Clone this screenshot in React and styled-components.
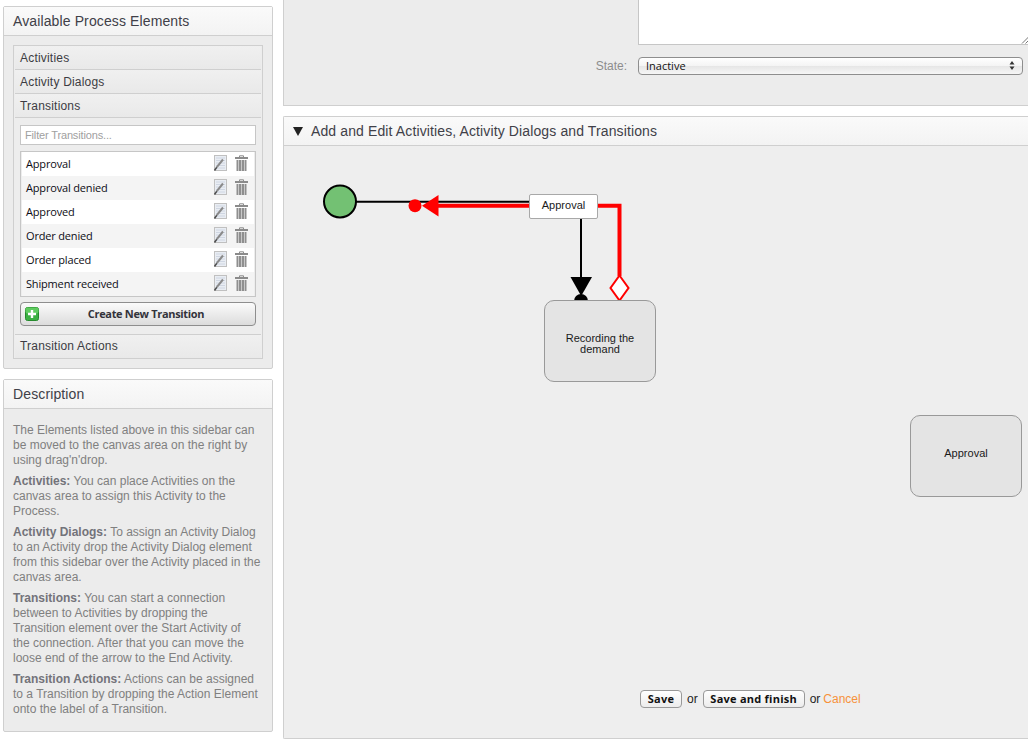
import React from "react";
import styled, { createGlobalStyle } from "styled-components";

const Global = createGlobalStyle`
  html, body { margin: 0; padding: 0; height: 740px; overflow: hidden; background: #fff; }
  body { font-family: "Liberation Sans", Arial, sans-serif; }
  * { box-sizing: border-box; }
`;

const Page = styled.div`
  display: flex;
  width: 1028px;
  height: 740px;
  overflow: hidden;
`;
const Sidebar = styled.aside`
  flex: none;
  width: 270px;
  margin-left: 3px;
  padding-top: 6px;
  display: flex;
  flex-direction: column;
  gap: 10px;
`;
const Panel = styled.section`
  background: #ececec;
  border: 1px solid #cfcfcf;
  border-radius: 2px;
  height: ${(p) => p.$h}px;
`;
const PanelHeader = styled.h2`
  margin: 0;
  height: 29px;
  padding-left: 9px;
  background: linear-gradient(#fafafa, #f3f3f3);
  border-bottom: 1px solid #cfcfcf;
  font-size: 14px;
  font-weight: normal;
  letter-spacing: 0.12px;
  line-height: 28px;
  color: #404048;
  display: flex;
  align-items: center;
  gap: 8px;
`;
const Accordion = styled.div`
  margin: 9px 9px 0;
  width: 250px;
  height: 314px;
  border: 1px solid #cfcfcf;
  padding: 0 1px;
  background: #ededed;
`;
const AccordionItem = styled.div`
  height: 24px;
  padding: 1px 0 0 5px;
  font-size: 12px;
  letter-spacing: 0.2px;
  line-height: 23px;
  color: #3c3c42;
  background: linear-gradient(#f0f0f0, #e9e9e9);
  border-bottom: 1px solid #cfcfcf;
  &:last-child { border-bottom: 0; border-top: 1px solid #cfcfcf; padding-top: 0; }
`;
const TabBody = styled.div`
  height: 216px;
  padding: 7px 5px 0;
  background: #ededed;
`;
const FilterInput = styled.input`
  display: block;
  width: 236px;
  height: 20px;
  padding: 0 4px;
  margin: 0;
  border: 1px solid #c6c6c6;
  background: #fff;
  font: 11px "Liberation Sans", Arial, sans-serif;
  letter-spacing: -0.15px;
  color: #888;
  outline: none;
  &::placeholder { color: #a0a0a0; opacity: 1; }
`;
const ItemList = styled.ul`
  list-style: none;
  margin: 6px 0 0;
  padding: 0 1px 1px;
  width: 236px;
  height: 146px;
  border: 1px solid #c6c6c6;
  background: #ededed;
`;
const Item = styled.li`
  height: 24px;
  display: flex;
  align-items: center;
  padding: 0 6px 0 4px;
  background: ${(p) => (p.$alt ? "#f4f4f4" : "#fff")};
  color: #0d0d14;
  font: 11px/24px "Open Sans", sans-serif;
  letter-spacing: -0.17px;
`;
const ItemName = styled.span`
  flex: 1;
`;
const ItemIcons = styled.span`
  display: flex;
  align-items: center;
  gap: 8px;
  margin-top: -2px;
`;
const CreateButton = styled.button`
  display: flex;
  align-items: center;
  width: 236px;
  height: 24px;
  margin: 5px 0 0;
  padding: 0 2px 1px 4px;
  border: 1px solid #8e8e8e;
  border-radius: 4px;
  background: linear-gradient(#fbfbfb, #dcdcdc);
  color: #33333b;
  font: bold 11px "Open Sans", sans-serif;
  letter-spacing: -0.33px;
`;
const CreateLabel = styled.span`
  flex: 1;
  text-align: center;
`;
const Description = styled.div`
  padding: 14px 0 0 9px;
  font-size: 12px;
  line-height: 15px;
  color: #808080;
  white-space: nowrap;
  p { margin: 0 0 6px; }
  b { color: #73737a; }
`;
const Main = styled.main`
  flex: none;
  width: 745px;
  margin-left: 10px;
  display: flex;
  flex-direction: column;
  gap: 10px;
`;
const PropsPanel = styled.section`
  height: 106px;
  background: #ececec;
  border-bottom: 1px solid #cfcfcf;
  border-left: 1px solid #cfcfcf;
  padding-left: 354px;
`;
const TextArea = styled.div`
  position: relative;
  height: 45px;
  width: 391px;
  background: #fff;
  border: 1px solid #c6c6c6;
  border-top: 0;
  border-right: 0;
`;
const Grip = styled.svg`
  position: absolute;
  right: 0;
  bottom: 0;
`;
const StateRow = styled.div`
  display: flex;
  align-items: center;
  margin-top: 12px;
  height: 18px;
`;
const StateLabel = styled.label`
  width: 343px;
  margin-left: -354px;
  text-align: right;
  font-size: 12px;
  color: #8c8c8c;
  margin-right: 11px;
  flex: none;
`;
const SelectBox = styled.div`
  width: 385px;
  height: 18px;
  flex: none;
  display: flex;
  align-items: center;
  justify-content: space-between;
  padding: 0 7px 2px 7px;
  border: 1px solid #8e8e8e;
  border-radius: 4px;
  background: linear-gradient(#fff 0, #f4f4f4 50%, #e6e6e6 51%, #f6f6f6 100%);
  font: 11px "Open Sans", sans-serif;
  color: #111;
`;
const CanvasPanel = styled.section`
  height: 623px;
  background: #ececec;
  border: 1px solid #cfcfcf;
  border-right: 0;
  border-radius: 2px 0 0 2px;
  display: flex;
  flex-direction: column;
`;
const Canvas = styled.div`
  position: relative;
  flex: 1;
  background: #eeeeee;
`;
const Wires = styled.svg`
  position: absolute;
  left: 0;
  top: 0;
`;
const Node = styled.div`
  position: absolute;
  left: ${(p) => p.$x}px;
  top: ${(p) => p.$y}px;
  width: 112px;
  height: 82px;
  display: flex;
  align-items: center;
  justify-content: center;
  padding: ${(p) => p.$pt}px 12px ${(p) => p.$pb}px;
  text-align: center;
  background: #e4e4e4;
  border: 1px solid #999;
  border-radius: 10px;
  font-size: 11px;
  line-height: 11px;
  color: #1a1a1a;
`;
const EdgeLabel = styled.div`
  position: absolute;
  left: 245px;
  top: 48px;
  width: 69px;
  height: 25px;
  background: #fff;
  border: 1px solid #a8a8a8;
  border-radius: 2px;
  text-align: center;
  font-size: 11px;
  line-height: 21px;
  color: #1a1a1a;
`;
const Actions = styled.div`
  position: absolute;
  left: 356px;
  top: 544px;
  display: flex;
  align-items: center;
  font-size: 12px;
  color: #222;
  white-space: nowrap;
`;
const ActionButton = styled.button`
  height: 18px;
  width: ${(p) => p.$w}px;
  padding: 0 0 1px;
  margin: 0 5px 0 0;
  border: 1px solid #999;
  border-radius: 4px;
  background: linear-gradient(#fff, #ececec);
  font: bold 11px "Open Sans", sans-serif;
  letter-spacing: 0.25px;
  color: #111;
`;
const Or = styled.span`
  margin-right: ${(p) => p.$mr}px;
`;
const Cancel = styled.a`
  color: #f7913a;
`;
const Triangle = styled.svg`
  flex: none;
`;

const EditIcon = () => (
  <svg width="14" height="16" viewBox="0 0 14 16">
    <rect x="1.5" y="0.5" width="12" height="15" fill="#e9edf3" stroke="#c0c0c0" />
    <path d="M3 3h9M3 5.5h9M3 8h9M3 10.5h9M3 13h9" stroke="#cfd6e2" />
    <path d="M10 4.5 3.8 12.2" stroke="#8a8a8a" strokeWidth="2" />
    <path d="M3.8 12.2 1.5 15.5" stroke="#4d4d4d" strokeWidth="1.5" />
  </svg>
);
const TrashIcon = () => (
  <svg width="13" height="16" viewBox="0 0 13 16">
    <path d="M4.5 2V.8h4V2" fill="none" stroke="#8b8b8b" />
    <rect x="0" y="2" width="13" height="2" fill="#8b8b8b" />
    <rect x="1.5" y="5" width="10" height="11" fill="#8f8f8f" />
    <path d="M3.5 5v11M6.5 5v11M9.5 5v11" stroke="#c8c8c8" strokeWidth="1" />
  </svg>
);
const PlusIcon = () => (
  <svg width="14" height="14" viewBox="0 0 14 14">
    <rect x="0.5" y="0.5" width="13" height="13" rx="2" fill="#3cb043" stroke="#258a2c" />
    <rect x="0.5" y="0.5" width="13" height="6" rx="2" fill="#5fcb5f" />
    <path d="M7 3v8M3 7h8" stroke="#fff" strokeWidth="2.4" />
  </svg>
);

const transitions = ["Approval", "Approval denied", "Approved", "Order denied", "Order placed", "Shipment received"];

export default function App() {
  return (
    <Page>
      <Global />
      <Sidebar>
        <Panel $h={363}>
          <PanelHeader>Available Process Elements</PanelHeader>
          <Accordion>
            <AccordionItem>Activities</AccordionItem>
            <AccordionItem>Activity Dialogs</AccordionItem>
            <AccordionItem>Transitions</AccordionItem>
            <TabBody>
              <FilterInput placeholder="Filter Transitions..." readOnly />
              <ItemList>
                {transitions.map((t, i) => (
                  <Item key={t} $alt={i % 2 === 1}>
                    <ItemName>{t}</ItemName>
                    <ItemIcons>
                      <EditIcon />
                      <TrashIcon />
                    </ItemIcons>
                  </Item>
                ))}
              </ItemList>
              <CreateButton>
                <PlusIcon />
                <CreateLabel>Create New Transition</CreateLabel>
              </CreateButton>
            </TabBody>
            <AccordionItem>Transition Actions</AccordionItem>
          </Accordion>
        </Panel>
        <Panel $h={353}>
          <PanelHeader>Description</PanelHeader>
          <Description>
            <p>The Elements listed above in this sidebar can<br />be moved to the canvas area on the right by<br />using drag'n'drop.</p>
            <p><b>Activities:</b> You can place Activities on the<br />canvas area to assign this Activity to the<br />Process.</p>
            <p><b>Activity Dialogs:</b> To assign an Activity Dialog<br />to an Activity drop the Activity Dialog element<br />from this sidebar over the Activity placed in the<br />canvas area.</p>
            <p><b>Transitions:</b> You can start a connection<br />between to Activities by dropping the<br />Transition element over the Start Activity of<br />the connection. After that you can move the<br />loose end of the arrow to the End Activity.</p>
            <p><b>Transition Actions:</b> Actions can be assigned<br />to a Transition by dropping the Action Element<br />onto the label of a Transition.</p>
          </Description>
        </Panel>
      </Sidebar>
      <Main>
        <PropsPanel>
          <TextArea>
            <Grip width="10" height="10" viewBox="0 0 10 10">
              <path d="M3 9.5 9.5 3M6.5 9.5 9.5 6.5" stroke="#777" strokeWidth="1" />
            </Grip>
          </TextArea>
          <StateRow>
            <StateLabel>State:</StateLabel>
            <SelectBox>
              Inactive
              <svg width="6" height="9" viewBox="0 0 6 9">
                <path d="M3 0 5.5 3.4H.5zM3 9 .5 5.6h5z" fill="#333" />
              </svg>
            </SelectBox>
          </StateRow>
        </PropsPanel>
        <CanvasPanel>
          <PanelHeader>
            <Triangle width="10" height="9" viewBox="0 0 10 9">
              <path d="M0 0h10L5 9z" fill="#222" />
            </Triangle>
            Add and Edit Activities, Activity Dialogs and Transitions
          </PanelHeader>
          <Canvas>
            <Wires width="744" height="593" viewBox="284 146 744 593">
              <path d="M356 201.7H530" stroke="#000" strokeWidth="2" fill="none" />
              <circle cx="340" cy="201.5" r="16" fill="#73c173" stroke="#000" strokeWidth="2" />
              <path d="M436 205.7H530" stroke="#f00" strokeWidth="4" fill="none" />
              <path d="M597 205.7H619.5V276" stroke="#f00" strokeWidth="4" fill="none" />
              <circle cx="415" cy="205.7" r="6.5" fill="#f00" />
              <path d="M422 205.7 438.5 195V216.4z" fill="#f00" />
              <path d="M581 218V278" stroke="#000" strokeWidth="2" fill="none" />
              <circle cx="581" cy="301" r="7" fill="#000" />
              <path d="M570.5 277H592L581.2 296z" fill="#000" />
              <path d="M619.5 275.5 628.5 288 619.5 300.5 610.5 288z" fill="#fff" stroke="#f00" strokeWidth="2" />
            </Wires>
            <EdgeLabel>Approval</EdgeLabel>
            <Node $x={260} $y={154} $pt={5} $pb={0}>Recording the demand</Node>
            <Node $x={626} $y={269} $pt={0} $pb={6}>Approval</Node>
            <Actions>
              <ActionButton $w={42}>Save</ActionButton>
              <Or $mr={5}>or</Or>
              <ActionButton $w={102}>Save and finish</ActionButton>
              <Or $mr={3}>or</Or>
              <Cancel>Cancel</Cancel>
            </Actions>
          </Canvas>
        </CanvasPanel>
      </Main>
    </Page>
  );
}
